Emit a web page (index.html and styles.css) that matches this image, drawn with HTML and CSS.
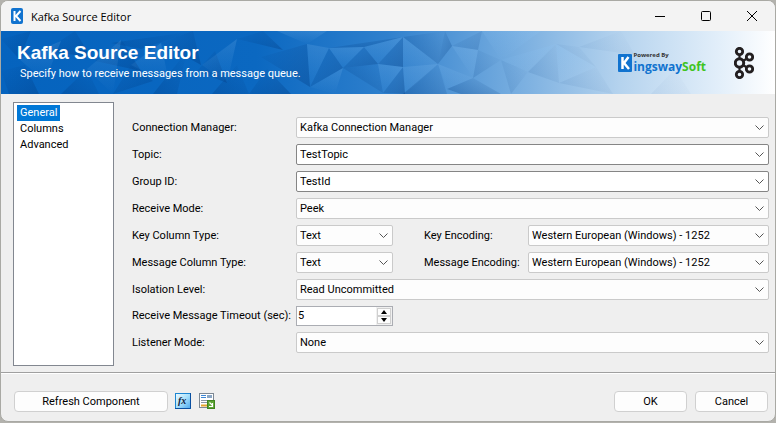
FILE: index.html
```
<!DOCTYPE html>
<html lang="en">
<head>
    <meta charset="UTF-8">
    <meta name="viewport" content="width=device-width, initial-scale=1.0">
    <title>Kafka Source Editor</title>
    <link rel="stylesheet" href="styles.css">
</head>
<body>
    <div class="window">
        <div class="titlebar">
            <svg class="app-icon" viewBox="0 0 12 16">
                <rect width="12" height="16" rx="2" fill="#1173cf"/>
                <path d="M3.500 3v10M9.500 3L5 8l4.500 5" fill="none" stroke="#fff" stroke-width="2"/>
            </svg>
            <span class="title">Kafka Source Editor</span>
            <button class="caption-button" aria-label="Minimize">
                <svg viewBox="0 0 10 10"><path d="M0 5.500h10"/></svg>
            </button>
            <button class="caption-button" aria-label="Maximize">
                <svg viewBox="0 0 10 10"><rect x="0.500" y="0.500" width="9" height="9" rx="1"/></svg>
            </button>
            <button class="caption-button" aria-label="Close">
                <svg viewBox="0 0 10 10"><path d="M0 0l10 10M10 0L0 10"/></svg>
            </button>
        </div>

        <div class="banner">
            <svg class="banner-art" viewBox="0 0 774 63" preserveAspectRatio="none">
                <defs>
                    <linearGradient id="base">
                        <stop offset="0" stop-color="#0563be"/>
                        <stop offset="0.33" stop-color="#0b68c1"/>
                        <stop offset="0.5" stop-color="#2f80cd"/>
                        <stop offset="0.65" stop-color="#70a9de"/>
                        <stop offset="0.8" stop-color="#b5d3ee"/>
                        <stop offset="0.93" stop-color="#e3effa"/>
                        <stop offset="1" stop-color="#ffffff"/>
                    </linearGradient>
                    <linearGradient id="dark" x1="0" y1="0" x2="1" y2="1">
                        <stop offset="0" stop-color="#003a80" stop-opacity="0"/>
                        <stop offset="1" stop-color="#003a80" stop-opacity="0.35"/>
                    </linearGradient>
                    <linearGradient id="dark2" x1="1" y1="0" x2="0" y2="1">
                        <stop offset="0" stop-color="#003a80" stop-opacity="0"/>
                        <stop offset="1" stop-color="#003a80" stop-opacity="0.3"/>
                    </linearGradient>
                    <linearGradient id="light" x1="0" y1="0" x2="0" y2="1">
                        <stop offset="0" stop-color="#8cc4f5" stop-opacity="0.18"/>
                        <stop offset="1" stop-color="#8cc4f5" stop-opacity="0"/>
                    </linearGradient>
                </defs>
                <rect width="774" height="63" fill="url(#base)"/>
                <g fill="url(#dark)">
                    <path d="M0 8L30 0 18 28z"/>
                    <path d="M44 20L74 0 90 26z"/>
                    <path d="M0 40L24 34 38 63H8z"/>
                    <path d="M94 30L121 9 140 40z"/>
                    <path d="M112 63L130 34 152 50z"/>
                    <path d="M160 12L192 0 200 34z"/>
                    <path d="M196 40L214 20 226 52z"/>
                    <path d="M236 8L262 0 282 19z"/>
                    <path d="M260 26L306 13 309 56z"/>
                    <path d="M248 63L266 38 290 63z"/>
                    <path d="M342 37L328 17 309 56z"/>
                    <path d="M342 37L363 16 377 33z"/>
                    <path d="M377 33L402 6V36z"/>
                    <path d="M328 17L402 6 363 16z"/>
                    <path d="M382 62L402 36 404 63z"/>
                    <path d="M437 33L451 15 444 0z"/>
                    <path d="M451 15L481 0 477 19z" opacity="0.5"/>
                </g>
                <g fill="url(#dark2)">
                    <path d="M140 18L194 0 110 12z"/>
                    <path d="M60 63L86 38 98 63z"/>
                    <path d="M152 63L186 20 176 63z"/>
                    <path d="M211 63L236 34 248 63z"/>
                    <path d="M402 6L444 0 437 33z"/>
                    <path d="M437 33L402 63H446z"/>
                    <path d="M377 33L342 37 382 62z"/>
                    <path d="M472 47L446 58 460 63H500z"/>
                    <path d="M477 19L500 29 472 47z" opacity="0.5"/>
                    <path d="M527 41L555 13 558 52z" opacity="0.4"/>
                    <path d="M555 13L578 16 595 36z" opacity="0.3"/>
                    <path d="M558 52L595 36 612 63z" opacity="0.3"/>
                    <path d="M500 29L527 41 510 63z" opacity="0.4"/>
                    <path d="M578 16L620 0 634 24z" opacity="0.2"/>
                    <path d="M650 63L674 38 690 63z" opacity="0.15"/>
                </g>
                <g fill="url(#light)">
                    <path d="M18 28L60 10 44 50z"/>
                    <path d="M86 38L120 9 112 63z"/>
                    <path d="M130 34L160 12 168 52z"/>
                    <path d="M201 34L236 8 226 52z"/>
                    <path d="M276 0H326L306 13z"/>
                    <path d="M309 56L342 37 334 63z"/>
                    <path d="M306 13L328 17 309 56z"/>
                    <path d="M328 17L363 16 342 37z"/>
                    <path d="M363 16L402 6 377 33z"/>
                    <path d="M402 6L437 33 402 36z"/>
                    <path d="M377 33L402 36 382 62z"/>
                    <path d="M402 36L437 33 404 63z"/>
                    <path d="M437 33L472 47 446 58z"/>
                    <path d="M451 15L477 19 472 47z"/>
                    <path d="M481 0H540L500 29z"/>
                    <path d="M500 29L555 13 527 41z"/>
                    <path d="M555 13L595 36 558 52z"/>
                </g>
            </svg>
            <div class="banner-text">
                <h1>Kafka Source Editor</h1>
                <p>Specify how to receive messages from a message queue.</p>
            </div>
            <div class="brand">
                <svg class="brand-mark" viewBox="0 0 14 18">
                    <rect width="14" height="18" rx="1" fill="#1173cf"/>
                    <path d="M4.500 3v12M10.500 3L6 9l5 6" fill="none" stroke="#fff" stroke-width="2.500"/>
                </svg>
                <div class="brand-words">
                    <span class="powered">Powered By</span>
                    <span class="brand-name">ingsway<span class="soft">Soft</span></span>
                </div>
            </div>
            <svg class="kafka-logo" viewBox="0 0 20 32">
                <g fill="none" stroke="#231f20">
                    <path d="M5.500 8v4M5.500 20v4M9 14l4-2.500M9 18l4 2.500" stroke-width="2.200"/>
                    <circle cx="5.500" cy="4.500" r="3.200" stroke-width="2.800"/>
                    <circle cx="5.500" cy="16" r="4.200" stroke-width="3"/>
                    <circle cx="5.500" cy="27.500" r="3.200" stroke-width="2.800"/>
                    <circle cx="15.500" cy="10" r="3.200" stroke-width="2.800"/>
                    <circle cx="15.500" cy="22" r="3.200" stroke-width="2.800"/>
                </g>
            </svg>
        </div>

        <div class="content">
            <nav class="pages">
                <a href="#general" class="selected">General</a>
                <a href="#columns">Columns</a>
                <a href="#advanced">Advanced</a>
            </nav>

            <form class="settings" id="general">
                <label for="connection">Connection Manager:</label>
                <select id="connection" class="wide"><option>Kafka Connection Manager</option></select>

                <label for="topic">Topic:</label>
                <input type="text" id="topic" class="wide combo" value="TestTopic">

                <label for="groupId">Group ID:</label>
                <input type="text" id="groupId" class="wide combo" value="TestId">

                <label for="receiveMode">Receive Mode:</label>
                <select id="receiveMode" class="wide"><option>Peek</option></select>

                <label for="keyType">Key Column Type:</label>
                <select id="keyType"><option>Text</option></select>
                <label for="keyEncoding" class="second">Key Encoding:</label>
                <select id="keyEncoding"><option>Western European (Windows) - 1252</option></select>

                <label for="messageType">Message Column Type:</label>
                <select id="messageType"><option>Text</option></select>
                <label for="messageEncoding" class="second">Message Encoding:</label>
                <select id="messageEncoding"><option>Western European (Windows) - 1252</option></select>

                <label for="isolation">Isolation Level:</label>
                <select id="isolation" class="wide"><option>Read Uncommitted</option></select>

                <label for="timeout">Receive Message Timeout (sec):</label>
                <div class="spinner">
                    <input type="text" id="timeout" value="5" inputmode="numeric">
                    <div class="spin-buttons">
                        <button type="button" aria-label="Increase"><svg viewBox="0 0 6 4"><path d="M0 4L3 0l3 4z"/></svg></button>
                        <button type="button" aria-label="Decrease"><svg viewBox="0 0 6 4"><path d="M0 0l3 4 3-4z"/></svg></button>
                    </div>
                </div>

                <label for="listener" class="first">Listener Mode:</label>
                <select id="listener" class="wide"><option>None</option></select>
            </form>
        </div>

        <div class="footer">
            <button class="push refresh">Refresh Component</button>
            <button class="tool" aria-label="Expressions">
                <svg viewBox="0 0 16 16">
                    <defs>
                        <linearGradient id="fxFill" x1="0" y1="0" x2="1" y2="1">
                            <stop offset="0" stop-color="#f2fcff"/>
                            <stop offset="0.500" stop-color="#a8e0fb"/>
                            <stop offset="1" stop-color="#4aa8ee"/>
                        </linearGradient>
                    </defs>
                    <rect x="0.500" y="0.500" width="15" height="15" fill="url(#fxFill)" stroke="#1c86d2"/>
                    <path d="M15.500 0v15.500H0" fill="none" stroke="#0a4fa0"/>
                    <text x="3" y="11" class="fx">fx</text>
                </svg>
            </button>
            <button class="tool" aria-label="Documentation">
                <svg viewBox="0 0 16 16">
                    <rect x="0.500" y="0.500" width="14" height="14" fill="#fff" stroke="#7d8894"/>
                    <path d="M2 2.500h5M2 4.500h5" stroke="#3d87d6"/>
                    <path d="M8 3.500h5" stroke="#8aa6c4" stroke-width="3"/>
                    <path d="M2 7.500h11M2 9.500h6" stroke="#8b96a2"/>
                    <path d="M2 12.500h6" stroke="#e3a32c" stroke-width="2"/>
                    <rect x="8.500" y="7.500" width="7" height="8" fill="#5ca532" stroke="#3f8420"/>
                    <path d="M10.500 9.500l3 3M13.500 10v3.500H10" fill="none" stroke="#fff" stroke-width="1.200"/>
                </svg>
            </button>
            <button class="push ok">OK</button>
            <button class="push">Cancel</button>
        </div>
    </div>
</body>
</html>
```

FILE: styles.css
```
* {
    box-sizing: border-box;
}

body {
    margin: 0;
    background-color: #b3b2ad;
    color: #000;
    font-family: Roboto, "Liberation Sans", Arial, sans-serif;
    font-size: 11px;
}

.window {
    display: flex;
    flex-direction: column;
    min-height: calc(100vh - 1px);
    border: 1px solid #a9a9a4;
    border-radius: 8px;
    background-color: #efefef;
    overflow: hidden;
}

button,
input,
select {
    font: inherit;
    color: inherit;
}

/* title bar */
.titlebar {
    display: flex;
    align-items: center;
    height: 30px;
    padding-left: 10px;
    background-color: #f3f3f3;
}

.app-icon {
    width: 12px;
    height: 16px;
}

.title {
    flex: 1;
    margin-left: 8px;
    font-family: "Open Sans", sans-serif;
}

.caption-button {
    display: flex;
    justify-content: center;
    align-items: center;
    width: 46px;
    height: 30px;
    padding: 0;
    border: none;
    background: none;
}

.caption-button svg {
    width: 10px;
    height: 10px;
    fill: none;
    stroke: #000;
    overflow: visible;
}

/* banner */
.banner {
    position: relative;
    display: flex;
    align-items: center;
    height: 63px;
    padding-right: 21px;
}

.banner-art {
    position: absolute;
    inset: 0;
    width: 100%;
    height: 100%;
}

.banner-text,
.brand,
.kafka-logo {
    position: relative;
}

.banner-text {
    flex: 1;
    padding-left: 16px;
    color: #fff;
}

.banner h1 {
    margin: 0;
    font-family: "Liberation Sans", Arial, sans-serif;
    font-size: 19px;
    line-height: 20px;
}

.banner p {
    margin: 3px 0 0 3px;
    line-height: 16px;
}

.brand {
    display: flex;
    align-items: center;
    margin-right: 28px;
}

.brand-mark {
    width: 14px;
    height: 18px;
}

.brand-words {
    display: flex;
    flex-direction: column;
    margin-left: 1px;
    font-family: "Open Sans", sans-serif;
    font-weight: bold;
}

.powered {
    font-size: 6px;
    line-height: 8px;
    color: #333;
}

.brand-name {
    font-size: 12px;
    line-height: 16px;
    color: #1173cf;
}

.soft {
    color: #3fc41f;
}

.kafka-logo {
    width: 20px;
    height: 32px;
}

/* page list and settings */
.content {
    flex: 1;
    display: flex;
    padding: 8px 6px 6px 12px;
}

.pages {
    display: flex;
    flex-direction: column;
    align-items: flex-start;
    width: 101px;
    padding: 2px 3px;
    border: 1px solid #828790;
    background-color: #fff;
}

.pages a {
    padding: 0 3px;
    color: #000;
    line-height: 16px;
    text-decoration: none;
}

.pages a.selected {
    background-color: #0078d7;
    color: #fff;
}

.settings {
    flex: 1;
    display: grid;
    grid-template-columns: 164px 97px 135px 1fr;
    align-content: start;
    align-items: center;
    row-gap: 6px;
    margin: 15px 0 0 18px;
}

.settings label {
    line-height: 20px;
    white-space: nowrap;
}

.settings .first {
    grid-column: 1;
}

.settings .second {
    padding-left: 31px;
}

.settings .wide {
    grid-column: 2 / -1;
}

.settings select,
.combo {
    width: 100%;
    height: 21px;
    padding: 0 20px 0 3px;
    border: 1px solid #cacaca;
    border-radius: 2px;
    background: #fdfdfd url("data:image/svg+xml,%3Csvg xmlns='http://www.w3.org/2000/svg' width='9' height='5'%3E%3Cpath d='M.5.5l4 4 4-4' fill='none' stroke='%23555'/%3E%3C/svg%3E") no-repeat right 4px center;
    appearance: none;
}

.settings .combo {
    border-color: #858585;
    background-color: #fff;
}

.spinner {
    display: flex;
    height: 20px;
    border: 1px solid #abadb3;
    background-color: #fff;
}

.spinner input {
    flex: 1;
    min-width: 0;
    padding: 0 1px 2px;
    border: none;
    background: none;
}

.spin-buttons {
    display: flex;
    flex-direction: column;
    width: 16px;
    padding: 1px;
    background-color: #f0f0f0;
}

.spin-buttons button {
    flex: 1;
    display: flex;
    justify-content: center;
    align-items: center;
    padding: 0;
    border: 1px solid #d0d0d0;
    background-color: #fdfdfd;
}

.spin-buttons svg {
    width: 6px;
    height: 4px;
}

/* bottom buttons */
.footer {
    display: flex;
    align-items: center;
    height: 49px;
    padding: 8px 7px 0 13px;
    border-top: 1px solid #a0a0a0;
    box-shadow: inset 0 1px #fff;
}

.push {
    width: 73px;
    height: 21px;
    padding: 0;
    border: 1px solid #d0d0d0;
    border-radius: 4px;
    background-color: #fdfdfd;
}

.refresh {
    width: 154px;
}

.ok {
    margin: 0 8px 0 auto;
}

.tool {
    display: flex;
    margin-left: 7px;
    padding: 0;
    border: none;
    background: none;
}

.tool + .tool {
    margin-left: 8px;
}

.tool svg {
    width: 16px;
    height: 16px;
}

.fx {
    font: italic bold 10px "Liberation Serif", serif;
    fill: #10233f;
}
```
